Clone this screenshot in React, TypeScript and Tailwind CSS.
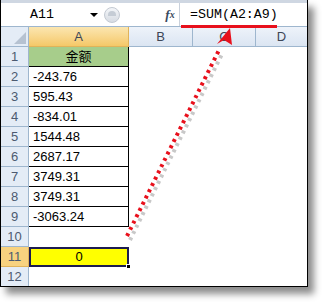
import React from "react";

const rows: { n: number; v: string }[] = [
  { n: 2, v: "-243.76" },
  { n: 3, v: "595.43" },
  { n: 4, v: "-834.01" },
  { n: 5, v: "1544.48" },
  { n: 6, v: "2687.17" },
  { n: 7, v: "3749.31" },
  { n: 8, v: "3749.31" },
  { n: 9, v: "-3063.24" },
];

const rowHead =
  "w-[28px] shrink-0 h-full flex items-center justify-center border-b border-r border-[#9eb6ce] text-[13px] text-[#4c5a70]";

const App: React.FC = () => {
  return (
    <div className="relative w-[329px] h-[308px] bg-white overflow-hidden" style={{ fontFamily: '"Liberation Sans", Arial, sans-serif' }}>
      <div className="w-[308px] h-[287px] border-r border-b border-l border-black flex flex-col overflow-hidden bg-white shadow-[6px_7px_7px_rgba(0,0,0,0.45)]">
        {/* formula bar */}
        <div className="h-[27px] shrink-0 flex items-stretch bg-white border-t-[3px] border-[#cfd7e2] border-b border-b-[#9eb6ce]">
          <div className="w-[86px] flex items-center pl-[29px] text-[13.3px] text-black" style={{ fontFamily: '"Liberation Mono", monospace' }}>
            A11
          </div>
          <div className="w-[14px] flex items-center justify-center">
            <div className="w-0 h-0 border-l-[4px] border-r-[4px] border-t-[4px] border-l-transparent border-r-transparent border-t-black" />
          </div>
          <div className="w-[60px] flex items-center pl-[3px]">
            <div className="w-[16px] h-[16px] rounded-full border border-[#c3c9d2] bg-gradient-to-b from-[#f4f6f9] to-[#d7dce3] flex items-center justify-center">
              <div className="w-[8px] h-[5px] rounded-t-full bg-[#c5ccd5] mb-[3px]" />
            </div>
          </div>
          <div className="w-[18px] flex items-center justify-center italic font-bold text-[13px] text-[#3a4a5e]" style={{ fontFamily: '"Liberation Serif", serif' }}>
            f<span className="text-[10px]">x</span>
          </div>
          <div className="flex-1 flex items-center pl-[10px] border-l border-[#c9d1dc] text-[13.3px] text-black" style={{ fontFamily: '"Liberation Mono", monospace' }}>
            =SUM(A2:A9)
          </div>
        </div>

        {/* column headers */}
        <div className="h-[20px] shrink-0 flex text-[13px] text-[#3d4656]">
          <div className="w-[28px] shrink-0 relative border-r border-b border-[#9eb6ce] bg-[#e4ecf6]">
            <div className="absolute right-[2px] bottom-[2px] w-0 h-0 border-l-[12px] border-t-[12px] border-l-transparent border-t-transparent border-b-0 border-r-0" style={{ borderRight: "0", borderBottom: "12px solid #b6c2d1" }} />
          </div>
          <div className="w-[100px] shrink-0 flex items-center justify-center bg-gradient-to-b from-[#fbe6b0] to-[#f5c867] border-r border-b border-[#e0b35a]">A</div>
          <div className="w-[64px] shrink-0 flex items-center justify-center bg-gradient-to-b from-[#eef3fa] to-[#dbe5f2] border-r border-b border-[#9eb6ce]">B</div>
          <div className="w-[63px] shrink-0 flex items-center justify-center bg-gradient-to-b from-[#eef3fa] to-[#dbe5f2] border-r border-b border-[#9eb6ce]">C</div>
          <div className="flex-1 flex items-center justify-center bg-gradient-to-b from-[#eef3fa] to-[#dbe5f2] border-b border-[#9eb6ce]">D</div>
        </div>

        {/* row 1 */}
        <div className="h-[20px] shrink-0 flex">
          <div className={rowHead + " bg-[#e4ecf6]"}>1</div>
          <div className="w-[100px] shrink-0 h-full flex items-center justify-center bg-[#a7cd8b] border-b border-r border-black text-[13px] text-black" style={{ fontFamily: '"Liberation Sans", "Noto Sans CJK SC", sans-serif' }}>
            金额
          </div>
        </div>

        {rows.map((r) => (
          <div key={r.n} className="h-[20px] shrink-0 flex">
            <div className={rowHead + " bg-[#e4ecf6]"}>{r.n}</div>
            <div className="w-[100px] shrink-0 h-full flex items-center pl-[4px] border-b border-r border-black text-[13px] text-black">
              {r.v}
            </div>
          </div>
        ))}

        {/* row 10 */}
        <div className="h-[20px] shrink-0 flex">
          <div className={rowHead + " bg-[#e4ecf6]"}>10</div>
        </div>

        {/* row 11 */}
        <div className="h-[20px] shrink-0 flex">
          <div className="w-[28px] shrink-0 h-full flex items-center justify-center border-b border-r border-[#e0b35a] bg-[#f8d27f] text-[13px] text-[#4c5a70]">11</div>
          <div className="relative w-[100px] shrink-0 h-full flex items-center justify-center bg-[#ffff00] border-2 border-[#1c1c50] text-[13px] text-black">
            0
            <div className="absolute right-[-4px] bottom-[-4px] w-[5px] h-[5px] bg-black border border-white" />
          </div>
        </div>

        {/* row 12 */}
        <div className="h-[20px] shrink-0 flex">
          <div className={rowHead + " bg-[#e4ecf6]"}>12</div>
        </div>
      </div>

      {/* annotation */}
      <svg className="absolute left-0 top-0 pointer-events-none" width="329" height="308">
        <line x1="130" y1="240" x2="223" y2="52" stroke="#c8c8c8" strokeWidth="4" strokeDasharray="3 4" />
        <line x1="127" y1="236" x2="220" y2="48" stroke="#e8101c" strokeWidth="4" strokeDasharray="3 4" />
        <rect x="181" y="25" width="96" height="3" fill="#e8101c" />
        <polygon points="230,28 232,45 224,40 217,44" fill="#e8101c" />
      </svg>
    </div>
  );
};

export default App;
